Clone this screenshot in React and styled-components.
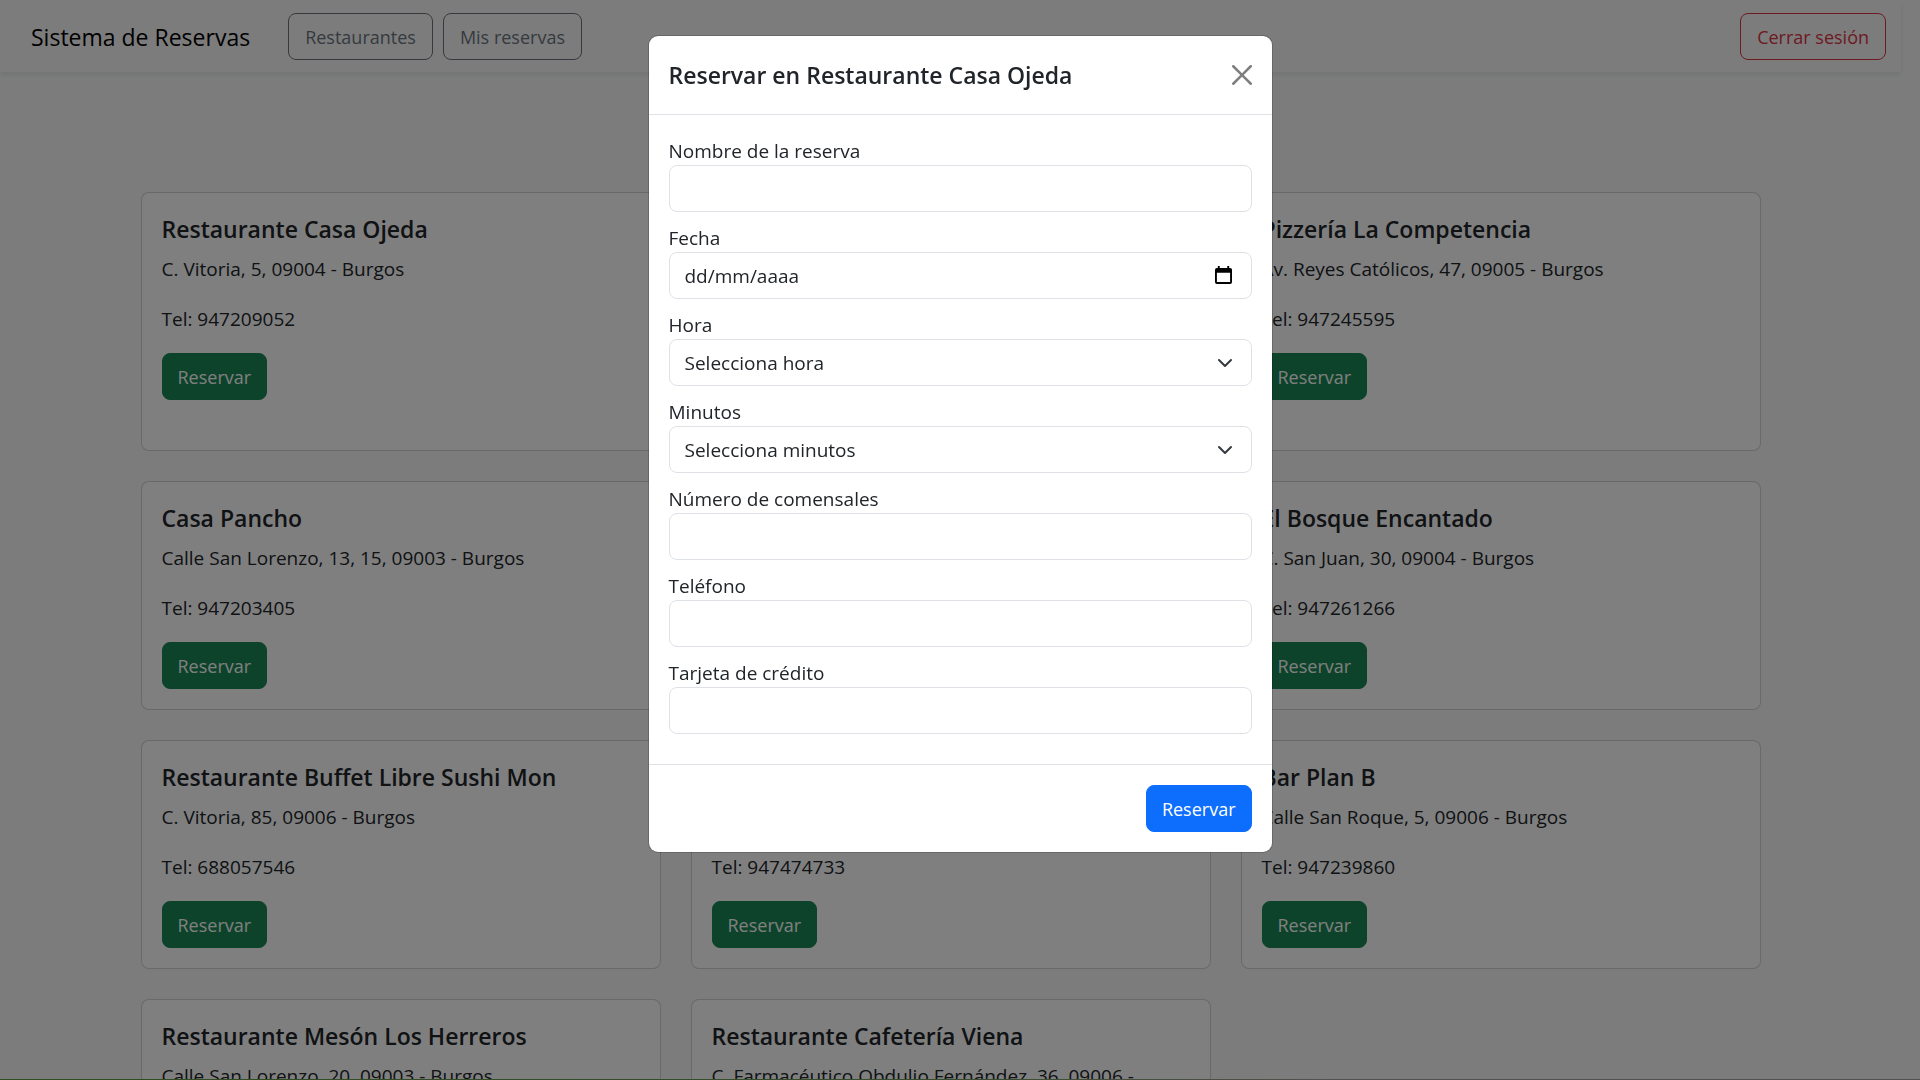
import React from "react";
import styled, { createGlobalStyle } from "styled-components";

const GlobalStyle = createGlobalStyle`
  *, *::before, *::after { box-sizing: border-box; }
  body {
    margin: 0;
    overflow: hidden;
    background: #f8f9fa;
    color: #212529;
    font-family: "Open Sans", "Noto Sans", sans-serif;
    font-size: 19px;
    line-height: 30px;
  }
  h1, h2, p { margin: 0; }
`;

const Page = styled.div`
  height: 100vh;
  overflow: hidden;
  padding-right: 19px;
  border-bottom: 1px solid;
  border-image: linear-gradient(to right, #5f9a3c, #6d9a5c 50%, #a8a2a0 70%) 1;
`;

const Navbar = styled.header`
  display: flex;
  align-items: center;
  justify-content: space-between;
  padding: 13px 15px 12px 31px;
  background: #f8f9fa;
  box-shadow: 0 3px 5px rgba(0, 0, 0, 0.075);
`;

const NavGroup = styled.nav`
  display: flex;
  align-items: center;
  gap: 10px;
`;

const Brand = styled.a`
  margin-right: 28px;
  color: #000;
  font-size: 23px;
  text-decoration: none;
`;

const fills = { success: "#198754", primary: "#0d6efd" };
const outlines = { secondary: "#6c757d", danger: "#dc3545" };

const Button = styled.button`
  padding: 9px ${(p) => (outlines[p.$variant] ? 16 : 15)}px 7px;
  border: 1px solid ${(p) => fills[p.$variant] || outlines[p.$variant]};
  border-radius: 8px;
  background: ${(p) => fills[p.$variant] || "transparent"};
  color: ${(p) => outlines[p.$variant] || "#fff"};
  font: inherit;
  font-size: 18px;
  line-height: 29px;
  cursor: pointer;
`;

const Grid = styled.main`
  display: grid;
  grid-template-columns: repeat(3, minmax(0, 1fr));
  gap: 30px;
  max-width: 1650px;
  margin: 0 auto;
  padding: 120px 15px 0;
`;

const Card = styled.article`
  display: flex;
  flex-direction: column;
  align-items: flex-start;
  padding: 21px 20px 20px;
  border: 1px solid rgba(0, 0, 0, 0.175);
  border-radius: 8px;
  background: #fff;
`;

const CardTitle = styled.h2`
  margin-bottom: 10px;
  font-size: 23px;
  font-weight: 600;
  line-height: 30px;
`;

const CardText = styled.p`
  margin-bottom: 20px;

  & + & { margin-bottom: 19px; }
`;

const Backdrop = styled.div`
  position: fixed;
  inset: 0;
  display: flex;
  align-items: flex-start;
  justify-content: center;
  padding-top: 35px;
  background: rgba(0, 0, 0, 0.5);
`;

const Modal = styled.form`
  width: 100%;
  max-width: 625px;
  border: 1px solid rgba(0, 0, 0, 0.175);
  border-radius: 10px;
  background: #fff;
  background-clip: padding-box;
`;

const ModalHeader = styled.div`
  display: flex;
  align-items: center;
  justify-content: space-between;
  padding: 20px;
  border-bottom: 1px solid #dee2e6;
`;

const ModalTitle = styled.h1`
  font-size: 23px;
  font-weight: 600;
  line-height: 38px;
`;

const CloseButton = styled.button`
  display: flex;
  padding: 0;
  border: 0;
  background: none;
  color: #000;
  opacity: 0.5;
  cursor: pointer;
`;

const ModalBody = styled.div`
  display: grid;
  gap: 10px;
  padding: 20px 20px 30px;
`;

const Field = styled.div`
  display: flex;
  flex-direction: column;
`;

const Label = styled.label`
  padding-top: 2px;
  line-height: 28px;
`;

const Control = styled.input`
  width: 100%;
  padding: 9px 15px 7px;
  border: 1px solid #dee2e6;
  border-radius: 8px;
  background: #fff;
  color: #212529;
  font: inherit;
  line-height: 29px;

  &::placeholder { color: #212529; opacity: 1; }
`;

const Select = styled(Control)`
  appearance: none;
  cursor: pointer;
`;

const ControlBox = styled.div`
  position: relative;
  display: flex;
`;

const ControlIcon = styled.span`
  position: absolute;
  top: 0;
  bottom: 0;
  right: 20px;
  display: flex;
  align-items: center;
  pointer-events: none;
`;

const ModalFooter = styled.div`
  display: flex;
  justify-content: flex-end;
  padding: 20px;
  border-top: 1px solid #dee2e6;
`;

const restaurants = [
  ["Restaurante Casa Ojeda", "C. Vitoria, 5, 09004 - Burgos", "947209052"],
  ["Restaurante La Fábrica", "C. Briviesca, 4, Bajo, esquina con Calle Vitoria, 09004 - Burgos", "947040420"],
  ["Pizzería La Competencia", "Av. Reyes Católicos, 47, 09005 - Burgos", "947245595"],
  ["Casa Pancho", "Calle San Lorenzo, 13, 15, 09003 - Burgos", "947203405"],
  ["La Favorita", "C. Avellanos, 8, 09003 - Burgos", "947205949"],
  ["El Bosque Encantado", "C. San Juan, 30, 09004 - Burgos", "947261266"],
  ["Restaurante Buffet Libre Sushi Mon", "C. Vitoria, 85, 09006 - Burgos", "688057546"],
  ["Restaurante Fornos", "C. Vitoria, 50, 09004 - Burgos", "947474733"],
  ["Bar Plan B", "Calle San Roque, 5, 09006 - Burgos", "947239860"],
  ["Restaurante Mesón Los Herreros", "Calle San Lorenzo, 20, 09003 - Burgos", "947202448"],
  ["Restaurante Cafetería Viena", "C. Farmacéutico Obdulio Fernández, 36, 09006 - Burgos", "947220208"],
];

function CalendarIcon() {
  return (
    <svg width="17" height="19" viewBox="0 0 18 20" aria-hidden="true">
      <path
        fill="#000"
        fillRule="evenodd"
        d="M3 0h2v2h8V0h2v2h1a2 2 0 0 1 2 2v13a2 2 0 0 1-2 2H2a2 2 0 0 1-2-2V4a2 2 0 0 1 2-2h1zM2 7v10h14V7z"
      />
    </svg>
  );
}

function ChevronIcon() {
  return (
    <svg width="14" height="14" viewBox="1 1 14 14" aria-hidden="true">
      <path fill="none" stroke="#343a40" strokeLinecap="round" strokeLinejoin="round" strokeWidth="2" d="m2 5 6 6 6-6" />
    </svg>
  );
}

function CloseIcon() {
  return (
    <svg width="20" height="20" viewBox="0 0 16 16" fill="currentColor" aria-hidden="true">
      <path d="M.293.293a1 1 0 0 1 1.414 0L8 6.586 14.293.293a1 1 0 1 1 1.414 1.414L9.414 8l6.293 6.293a1 1 0 0 1-1.414 1.414L8 9.414l-6.293 6.293a1 1 0 0 1-1.414-1.414L6.586 8 .293 1.707a1 1 0 0 1 0-1.414" />
    </svg>
  );
}

function TextField({ id, label, ...rest }) {
  return (
    <Field>
      <Label htmlFor={id}>{label}</Label>
      <Control id={id} type="text" {...rest} />
    </Field>
  );
}

function DateField({ id, label }) {
  return (
    <Field>
      <Label htmlFor={id}>{label}</Label>
      <ControlBox>
        <Control id={id} type="text" placeholder="dd/mm/aaaa" />
        <ControlIcon><CalendarIcon /></ControlIcon>
      </ControlBox>
    </Field>
  );
}

function SelectField({ id, label, placeholder, options }) {
  return (
    <Field>
      <Label htmlFor={id}>{label}</Label>
      <ControlBox>
        <Select as="select" id={id} defaultValue="">
          <option value="">{placeholder}</option>
          {options.map((o) => <option key={o}>{o}</option>)}
        </Select>
        <ControlIcon><ChevronIcon /></ControlIcon>
      </ControlBox>
    </Field>
  );
}

export default function App() {
  return (
    <>
      <GlobalStyle />
      <Page>
        <Navbar>
          <NavGroup>
            <Brand href="#">Sistema de Reservas</Brand>
            <Button $variant="secondary">Restaurantes</Button>
            <Button $variant="secondary">Mis reservas</Button>
          </NavGroup>
          <Button $variant="danger">Cerrar sesión</Button>
        </Navbar>
        <Grid>
          {restaurants.map(([name, address, phone]) => (
            <Card key={name}>
              <CardTitle>{name}</CardTitle>
              <CardText>{address}</CardText>
              <CardText>Tel: {phone}</CardText>
              <Button $variant="success">Reservar</Button>
            </Card>
          ))}
        </Grid>
      </Page>
      <Backdrop>
        <Modal role="dialog" aria-labelledby="modal-title">
          <ModalHeader>
            <ModalTitle id="modal-title">Reservar en Restaurante Casa Ojeda</ModalTitle>
            <CloseButton type="button" aria-label="Cerrar"><CloseIcon /></CloseButton>
          </ModalHeader>
          <ModalBody>
            <TextField id="nombre" label="Nombre de la reserva" />
            <DateField id="fecha" label="Fecha" />
            <SelectField id="hora" label="Hora" placeholder="Selecciona hora" options={["13", "14", "15", "20", "21", "22"]} />
            <SelectField id="minutos" label="Minutos" placeholder="Selecciona minutos" options={["00", "15", "30", "45"]} />
            <TextField id="comensales" label="Número de comensales" inputMode="numeric" />
            <TextField id="telefono" label="Teléfono" inputMode="tel" />
            <TextField id="tarjeta" label="Tarjeta de crédito" inputMode="numeric" />
          </ModalBody>
          <ModalFooter>
            <Button type="button" $variant="primary">Reservar</Button>
          </ModalFooter>
        </Modal>
      </Backdrop>
    </>
  );
}
